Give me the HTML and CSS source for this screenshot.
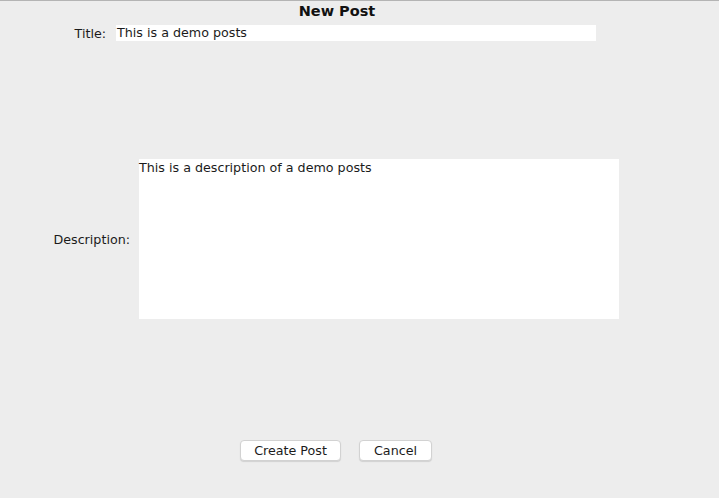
FILE: index.html
```html
<!DOCTYPE html>
<html>
<head>
<meta charset="utf-8">
<link rel="stylesheet" href="styles.css">
</head>
<body>
<div class="page">
  <div class="heading">New Post</div>
  <div class="row row-title">
    <label class="label label-title">Title:</label>
    <div class="field field-title">This is a demo posts</div>
  </div>
  <div class="row row-desc">
    <label class="label label-desc">Description:</label>
    <div class="field field-desc">This is a description of a demo posts</div>
  </div>
  <div class="actions">
    <button class="btn btn-create">Create Post</button>
    <button class="btn btn-cancel">Cancel</button>
  </div>
</div>
</body>
</html>
```
FILE: styles.css
```css
html, body {
  margin: 0;
  padding: 0;
  background: #ededed;
}
body {
  font-family: "DejaVu Sans", "Liberation Sans", sans-serif;
  font-size: 12.7px;
  color: #1b1b1b;
}
.page {
  width: 719px;
  height: 498px;
  box-sizing: border-box;
  border-top: 1px solid #b4b4b4;
  display: flex;
  flex-direction: column;
}
.heading {
  height: 24px;
  line-height: 20px;
  font-weight: bold;
  font-size: 14.5px;
  color: #111;
  display: flex;
  justify-content: center;
  padding-right: 45px;
}
.row {
  display: flex;
}
.row-title {
  align-items: center;
}
.label {
  text-align: right;
  flex: none;
}
.label-title {
  width: 106px;
  margin-right: 10px;
}
.field {
  background: #fff;
  width: 480px;
  box-sizing: border-box;
  flex: none;
}
.field-title {
  height: 16px;
  line-height: 16px;
  padding-left: 1px;
}
.row-desc {
  margin-top: 118px;
  align-items: center;
}
.label-desc {
  width: 130px;
  margin-right: 9px;
}
.field-desc {
  height: 160px;
  line-height: 17px;
  padding-top: 0;
}
.actions {
  margin-top: 121px;
  display: flex;
  padding-left: 240px;
  gap: 18px;
}
.btn {
  font-family: inherit;
  font-size: 12.7px;
  color: #1b1b1b;
  height: 21px;
  background: #fff;
  border: 1px solid #d2d2d2;
  border-radius: 4px;
  box-shadow: 0 1px 1px rgba(0,0,0,0.12);
  padding: 0;
  line-height: 18px;
}
.btn-create {
  width: 101px;
}
.btn-cancel {
  width: 73px;
}
```
